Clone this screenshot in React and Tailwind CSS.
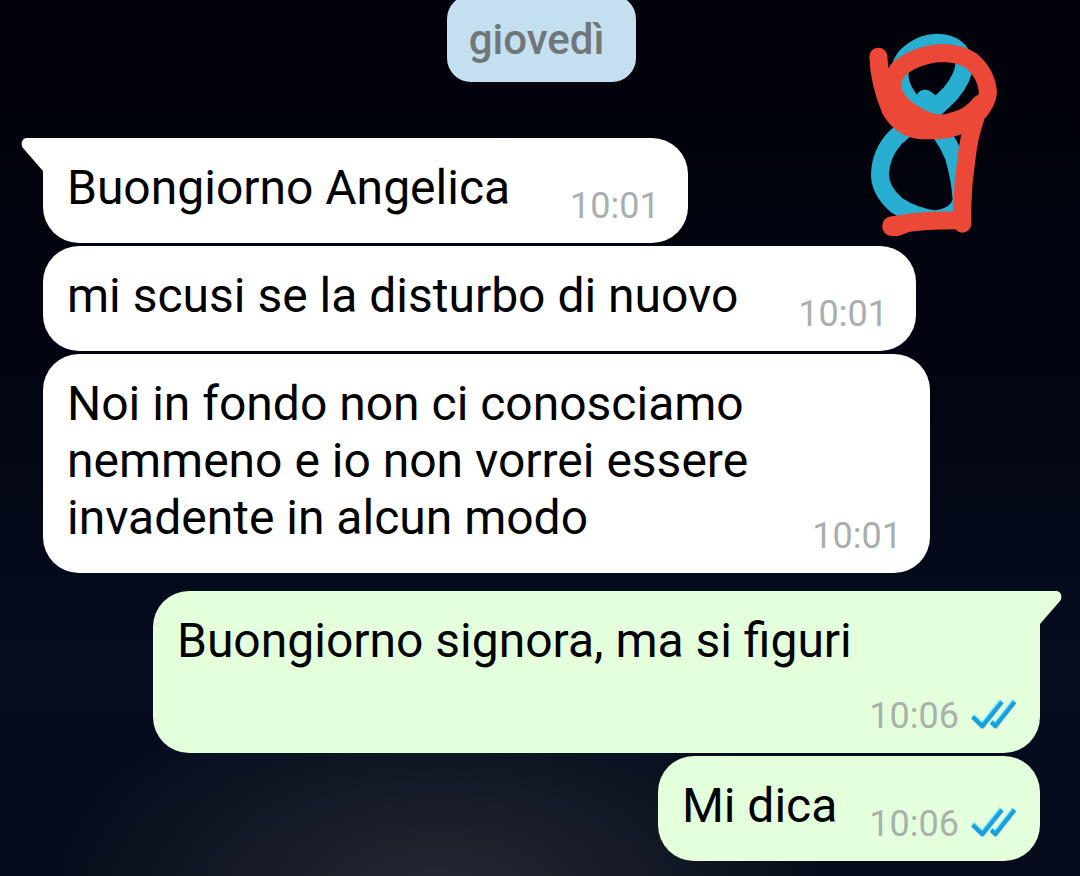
const MESSAGES = [
  { id: 1, text: 'Buongiorno Angelica', time: '10:01', mine: false, first: true },
  { id: 2, text: 'mi scusi se la disturbo di nuovo', time: '10:01', mine: false },
  {
    id: 3,
    text: 'Noi in fondo non ci conosciamo nemmeno e io non vorrei essere invadente in alcun modo',
    time: '10:01',
    mine: false,
  },
  { id: 4, text: 'Buongiorno signora, ma si figuri', time: '10:06', mine: true, first: true },
  { id: 5, text: 'Mi dica', time: '10:06', mine: true },
]

function Ticks() {
  return (
    <svg className="w-[45px] h-[29px] mb-2 overflow-visible" viewBox="0 0 135 87" fill="none" strokeWidth="13" strokeLinejoin="round" role="img" aria-label="Letto">
      <path stroke="#6fe3fb" d="M5 47 34 74 91 2M60 64l13 10L129 2" />
      <path stroke="#1a9fdc" d="M5 51 34 79 93 6M61 67l12 12L131 6" />
    </svg>
  )
}

function Tail({ mine }) {
  return mine ? (
    <svg className="absolute top-0 left-full w-[22px] h-[34px]" viewBox="0 0 22 34" aria-hidden="true">
      <path fill="#e4ffdc" d="M-1 0H16C21 0 23 6 20 10L0 33H-1Z" />
    </svg>
  ) : (
    <svg className="absolute top-0 right-full w-[22px] h-[34px]" viewBox="0 0 22 34" aria-hidden="true">
      <path fill="#fff" d="M23 0H6C1 0-1 6 2 10L22 33H23Z" />
    </svg>
  )
}

function Bubble({ message }) {
  const { text, time, mine, first } = message

  if (mine) {
    return (
      <li
        className={`relative self-end flex flex-wrap justify-end gap-x-8 max-w-[887px] px-6 pt-[21px] pb-[27px]
          rounded-[36px] bg-[#e4ffdc] ${first ? 'rounded-tr-none mt-[15px]' : ''}`}
      >
        {first && <Tail mine />}
        <p className="mr-auto">{text}</p>
        <div className="flex items-end gap-3 h-[68px] -mb-[11px]">
          <time className="text-[36px] leading-[42px] text-[#a9b1aa]">{time}</time>
          <Ticks />
        </div>
      </li>
    )
  }

  return (
    <li
      className={`relative self-start flex items-end gap-[60px] max-w-[887px] pl-6 pr-7 pt-[21px] pb-[27px]
        rounded-[36px] bg-white ${first ? 'rounded-tl-none' : ''}`}
    >
      {first && <Tail />}
      <p>{text}</p>
      <time className="-mb-[11px] text-[36px] leading-[42px] text-[#a9aeb1]">{time}</time>
    </li>
  )
}

// Freehand marker strokes: blue loop underneath, red one on top
function Doodle() {
  return (
    <svg
      className="absolute top-5 right-[60px] w-[170px] h-[230px]"
      viewBox="0 0 510 690"
      fill="none"
      strokeWidth="54"
      strokeLinecap="round"
      strokeLinejoin="round"
      aria-hidden="true"
    >
      <path
        stroke="#27aed0"
        d="M225 236L258 262L300 222Q340 175 344 130Q330 70 260 68Q210 70 170 108Q140 145 152 190Q165 235 215 275Q285 340 312 410Q332 480 335 540Q325 590 255 598Q195 592 140 556Q88 510 90 460Q93 400 134 355Q180 310 240 280L300 222"
      />
      <path
        stroke="#ec4837"
        d="M85 110Q88 190 122 270Q155 325 215 331H265Q340 325 387 275Q412 245 414 215Q408 160 365 123Q330 99 275 99Q190 105 142 152Q122 180 127 210Q145 260 205 290Q260 324 315 302Q362 290 392 250M376 295Q356 350 349 420Q338 490 337 560L337 611M335 600Q240 602 195 606L124 616V621H140L165 612"
      />
    </svg>
  )
}

export default function App() {
  return (
    <main
      className="relative min-h-screen overflow-hidden pl-[43px] pr-10 pb-4 font-[Roboto,sans-serif] text-[48px] leading-[57px] text-black
        bg-[radial-gradient(ellipse_400px_220px_at_440px_900px,#252a33,transparent),linear-gradient(#010209,#020512_45%,#050d1f_75%,#050b1a)]"
    >
      <div className="flex justify-center">
        <h1 className="-mt-[5px] pl-[22px] pr-8 pt-[21px] pb-[18px] rounded-3xl bg-[#c4e0f0] text-[42px] leading-[48px] font-medium text-[#717678]">
          giovedì
        </h1>
      </div>
      <ul className="mt-14 flex flex-col gap-[3px]">
        {MESSAGES.map(m => (
          <Bubble key={m.id} message={m} />
        ))}
      </ul>
      <Doodle />
    </main>
  )
}
